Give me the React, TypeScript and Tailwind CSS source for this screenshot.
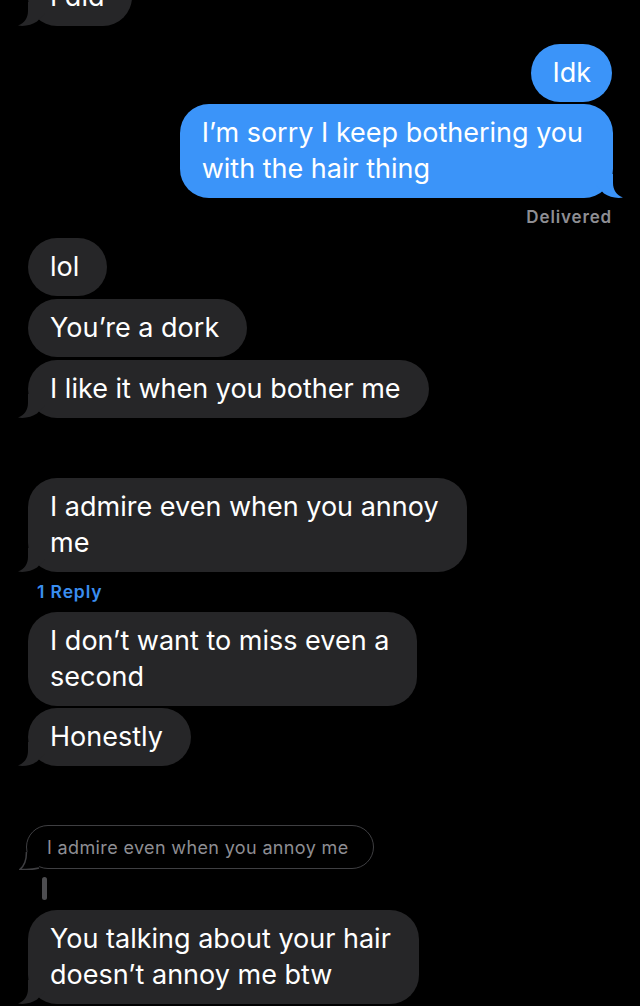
import React from "react";

const GRAY = "#262628";
const BLUE = "#3b94f9";

function Tail({ color, right }: { color: string; right?: boolean }) {
  return (
    <svg
      className={
        right
          ? "absolute bottom-0 right-[-10px] w-[30px] h-[24px]"
          : "absolute bottom-0 left-[-10px] w-[30px] h-[24px]"
      }
      viewBox="0 0 30 24"
    >
      <g transform={right ? "translate(30,0) scale(-1,1)" : undefined}>
        <path
          d="M10 0 L10 9 C10 16 6.5 21 0 23.6 C7 24.6 14 23 19 19.5 L28 10 L28 0 Z"
          fill={color}
        />
      </g>
    </svg>
  );
}

function Gray({
  children,
  tail,
  className,
}: {
  children: React.ReactNode;
  tail?: boolean;
  className?: string;
}) {
  return (
    <div
      className={
        "relative self-start ml-[28px] bg-[#262628] rounded-[29px] pl-[22px] pr-[28px] py-[11px] text-[27px] leading-[36px] text-white whitespace-nowrap " +
        (className ?? "")
      }
    >
      {tail && <Tail color={GRAY} />}
      <span className="relative">{children}</span>
    </div>
  );
}

export default function App() {
  return (
    <div
      className="w-[640px] h-[1006px] bg-black overflow-hidden flex flex-col"
      style={{ fontFamily: "Inter, 'Noto Sans', sans-serif" }}
    >
      <Gray tail className="mt-[-32px]">I did</Gray>

      <div className="relative self-end mr-[28px] mt-[18px] bg-[#3b94f9] rounded-[29px] px-[21px] py-[11px] text-[27px] leading-[36px] text-white whitespace-nowrap">
        Idk
      </div>
      <div className="relative self-end mr-[27px] mt-[2px] bg-[#3b94f9] rounded-[29px] pl-[22px] pr-[30px] py-[11px] text-[27px] leading-[36px] text-white whitespace-nowrap">
        <Tail color={BLUE} right />
        <span className="relative">
          I’m sorry I keep bothering you
          <br />
          with the hair thing
        </span>
      </div>
      <div className="self-end mr-[28px] mt-[9px] text-[17px] leading-[20px] font-semibold text-[#8e8e93] tracking-[0.05em]">
        Delivered
      </div>

      <Gray className="mt-[11px]">lol</Gray>
      <Gray className="mt-[3px]">You’re a dork</Gray>
      <Gray tail className="mt-[3px]">
        I like it when you bother me
      </Gray>

      <Gray tail className="mt-[60px]">
        I admire even when you annoy
        <br />
        me
      </Gray>
      <div className="ml-[37px] mt-[10px] text-[17.5px] leading-[20px] font-semibold text-[#3a8ef0] tracking-[0.05em]">
        1 Reply
      </div>
      <Gray className="mt-[10px]">
        I don’t want to miss even a
        <br />
        second
      </Gray>
      <Gray tail className="mt-[2px]">
        Honestly
      </Gray>

      <div className="relative self-start ml-[26px] mt-[59px] h-[44px] flex items-center rounded-full border-[1.5px] border-[#3f3f42] pl-[20px] pr-[24px] text-[18px] text-[#8e8e93] whitespace-nowrap tracking-[0.02em]">
        <svg
          className="absolute bottom-[-1.5px] left-[-8.5px] w-[24px] h-[20px]"
          viewBox="0 0 24 20"
        >
          <path
            d="M7.4 2 C7.6 10 5 16 1 19.3 C6 19.8 14 19.5 20 18.1 L20 2 Z"
            fill="#000"
          />
          <path
            d="M7.4 2 C7.6 10 5 16 1 19.3 C6 19.8 14 19.5 20 18.1"
            fill="none"
            stroke="#3f3f42"
            strokeWidth="1.5"
          />
        </svg>
        <span className="relative">I admire even when you annoy me</span>
      </div>
      <div className="ml-[42px] mt-[8px] w-[5px] h-[23px] rounded-full bg-[#4d4d50]" />

      <Gray tail className="mt-[10px]">
        You talking about your hair
        <br />
        doesn’t annoy me btw
      </Gray>
    </div>
  );
}
